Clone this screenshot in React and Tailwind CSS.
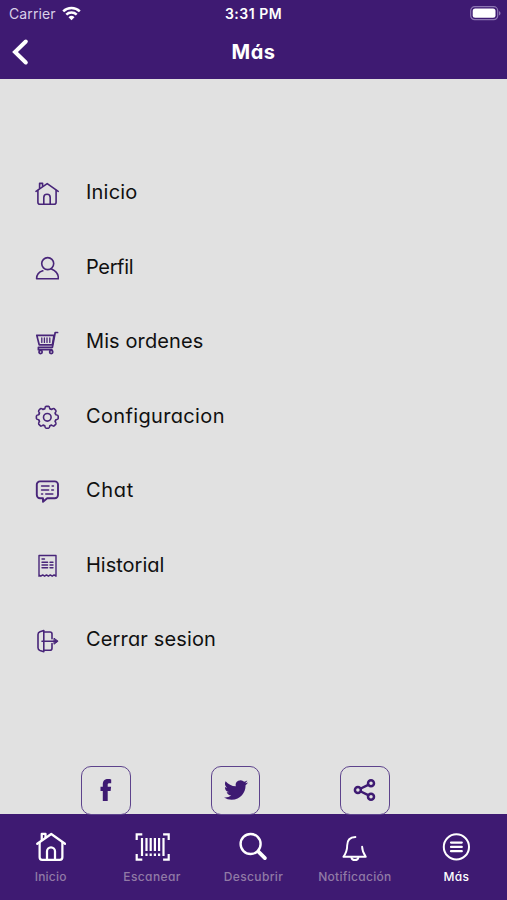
import React from 'react';

function Icon({ className = 'w-6 h-6', stroke = 1.5, children, viewBox = '0 0 24 24' }) {
  return (
    <svg
      className={className}
      viewBox={viewBox}
      fill="none"
      stroke="currentColor"
      strokeWidth={stroke}
      strokeLinecap="round"
      strokeLinejoin="round"
    >
      {children}
    </svg>
  );
}

function HomeIcon({ className, stroke = 1.6 }) {
  return (
    <Icon className={className} stroke={stroke}>
      <path d="M1 9.4 12.2 1.6 23.2 9.4" />
      <path d="M2.9 8.6v11.6a2 2 0 0 0 2 2h14.2a2 2 0 0 0 2-2V8.600" />
      <path d="M4.600 6.400V1.400h3v2.800" />
      <path d="M8.800 22v-6.600a3.200 3.200 0 0 1 6.400 0V22" />
    </Icon>
  );
}

function ProfileIcon() {
  return (
    <Icon stroke={1.6}>
      <circle cx="12.700" cy="7.600" r="6" />
      <path d="M7.800 14.800C4 16 1.600 19.200 1.600 22.700h21.800c0-4.200-2.800-8-7-9.600" />
    </Icon>
  );
}

function CartIcon() {
  return (
    <Icon stroke={1.7}>
      <path d="M1.800 4.400h17.200l-1.600 9.400H4.200z" />
      <path d="M22.600 1.500h-2.400l-2.800 14.800H4.400" />
      <path d="M6.800 7v4.400M9.400 7v4.400M12 7v4.400M14.800 7v4.400" strokeWidth="1.300" />
      <circle cx="5.600" cy="21" r="1.600" />
      <circle cx="16.200" cy="21" r="1.600" />
      <path d="M3.400 16.400v2.300h13.400" />
    </Icon>
  );
}

function GearIcon() {
  const teeth = [0, 45, 90, 135, 180, 225, 270, 315];
  return (
    <Icon stroke={1.6}>
      {teeth.map((deg) => (
        <path
          key={deg}
          transform={`translate(12.300 12.300) rotate(${deg})`}
          d="M-3.400-8.200-2.500-8.500Q-2.100-10.900-1.300-10.900H1.300Q2.100-10.900 2.500-8.500L3.400-8.200"
        />
      ))}
      <circle cx="12.300" cy="12.300" r="3.800" />
    </Icon>
  );
}

function ChatIcon() {
  return (
    <Icon stroke={1.9}>
      <path d="M5 1.400h14.800a3.200 3.200 0 0 1 3.200 3.200V15a3.200 3.200 0 0 1-3.200 3.200H12.200l-4.200 3.600v-3.600H5A3.200 3.200 0 0 1 1.800 15V4.600A3.200 3.200 0 0 1 5 1.400z" />
      <path d="M6.600 6h7.400M17.200 6h1.200M6.600 10h7M16.800 10h1.600M6.600 14h1M10.800 14h7" strokeWidth="1.600" />
    </Icon>
  );
}

function ReceiptIcon() {
  return (
    <Icon stroke={1.4}>
      <path d="M4 1.500h17v20.700l-1.900-1.300-1.900 1.300-1.900-1.300-1.900 1.300-1.900-1.300-1.900 1.300-1.900-1.300-1.900 1.300-1.800-1.300L4 22.200z" />
      <path d="M7 5h2.500M7 8.200h5.600M15 8.200h3M7 11h5.600M15 11h3M7 13.800h5.600M15 13.800h3" />
    </Icon>
  );
}

function LogoutIcon() {
  return (
    <Icon stroke={1.6}>
      <path d="M8.800 1.600v21.200L5 21.600a3 3 0 0 1-2-2.800V5.600A3 3 0 0 1 5 2.800z" />
      <path d="M9 3h6a2 2 0 0 1 2 2v4.800M17 14.600v4.600a2 2 0 0 1-2 2H9" />
      <path d="M7 12.200h14" />
      <path d="m19.300 9.400 3.800 2.800-3.800 2.800z" fill="currentColor" strokeWidth="1" />
    </Icon>
  );
}

function FacebookIcon() {
  return (
    <svg className="w-6 h-6" viewBox="0 0 24 24" fill="currentColor">
      <path d="M8.800 23V13H6.500V8.800h2.300V6.500c0-3.600 2-5.400 5.300-5.400 1.100 0 2.200.1 3.100.3v3.800h-1.800c-1.300 0-1.700.5-1.700 1.500v2.100h3.400L16.600 13h-2.900v10z" />
    </svg>
  );
}

function TwitterIcon() {
  return (
    <svg className="w-6 h-6 ml-px" viewBox="0 0 24 24" fill="currentColor">
      <path d="M23.953 4.570a10 10 0 0 1-2.825.775 4.958 4.958 0 0 0 2.163-2.723 9.990 9.990 0 0 1-3.127 1.184 4.920 4.920 0 0 0-8.384 4.482C7.690 8.095 4.067 6.130 1.640 3.162a4.822 4.822 0 0 0-.666 2.475c0 1.710.870 3.213 2.188 4.096a4.904 4.904 0 0 1-2.228-.616v.060a4.923 4.923 0 0 0 3.946 4.827 4.996 4.996 0 0 1-2.212.085 4.936 4.936 0 0 0 4.604 3.417 9.867 9.867 0 0 1-6.102 2.105c-.390 0-.779-.023-1.170-.067a13.995 13.995 0 0 0 7.557 2.209c9.053 0 13.998-7.496 13.998-13.985 0-.210 0-.420-.015-.630a9.935 9.935 0 0 0 2.460-2.548z" />
    </svg>
  );
}

function ShareIcon() {
  return (
    <Icon stroke={2.500}>
      <circle cx="4.900" cy="12" r="3" />
      <circle cx="18" cy="5.200" r="3" />
      <circle cx="18" cy="18.800" r="3" />
      <path d="m7.800 10.500 7.400-3.700M7.800 13.500l7.400 3.700" />
    </Icon>
  );
}

function BarcodeIcon() {
  return (
    <svg className="w-[36px] h-[30px] translate-x-[0.500px]" viewBox="0 0 36 30" fill="none" stroke="currentColor">
      <path d="M2.200 8V2.400h5.600M28.600 2.400h5.600V8M2.200 22v5.600h5.600M28.600 27.600h5.600V22" strokeWidth="2.200" />
      <path d="M7.500 6v18M12 6v13M16.200 6v13M20.400 6v13M24.600 6v13M29 6v18" strokeWidth="2.200" />
      <path d="M12 21.400v2.600M16.200 21.400v2.600M20.400 21.400v2.600M24.600 21.400v2.600" strokeWidth="2.200" />
    </svg>
  );
}

function SearchIcon() {
  return (
    <Icon className="w-[30px] h-[30px]" viewBox="0 0 30 30" stroke={2.400}>
      <circle cx="12.600" cy="12" r="10" />
      <path d="m20.400 19.600 6.500 6.500" strokeWidth="3.800" />
    </Icon>
  );
}

function BellIcon() {
  return (
    <Icon className="w-[30px] h-[30px]" viewBox="0 0 30 30" stroke={1.900}>
      <path d="M15.400 5c-5.600.200-8.200 3.800-8.200 8.300 0 5-1 7.800-3.800 11.500h22.400c-2.300-3.200-3.700-6-3.700-10.200" />
      <path d="M11.400 25.500c.6 3.400 6.400 3.400 7 0" />
    </Icon>
  );
}

function MoreIcon() {
  return (
    <Icon className="w-[30px] h-[30px]" viewBox="0 0 30 30" stroke={2}>
      <circle cx="15.400" cy="14.900" r="12.600" />
      <path d="M10 10.600h10.800M10 14.900h10.800M10 19.200h10.800" strokeWidth="2.200" />
    </Icon>
  );
}

const menuItems = [
  { label: 'Inicio', icon: <HomeIcon />, spacing: 'tracking-[0.2px]' },
  { label: 'Perfil', icon: <ProfileIcon />, spacing: 'tracking-[-0.35px]' },
  { label: 'Mis ordenes', icon: <CartIcon />, spacing: 'tracking-[0.1px]' },
  { label: 'Configuracion', icon: <GearIcon />, spacing: 'tracking-[0.35px]' },
  { label: 'Chat', icon: <ChatIcon />, spacing: 'tracking-[0.7px]' },
  { label: 'Historial', icon: <ReceiptIcon />, spacing: 'tracking-[0px]' },
  { label: 'Cerrar sesion', icon: <LogoutIcon />, spacing: 'tracking-[0.15px]' },
];

const socials = [
  { name: 'facebook', icon: <FacebookIcon /> },
  { name: 'twitter', icon: <TwitterIcon /> },
  { name: 'share', icon: <ShareIcon /> },
];

const tabs = [
  { label: 'Inicio', icon: <HomeIcon className="w-[30px] h-[30px]" stroke={1.800} />, spacing: 'tracking-[0.2px]' },
  { label: 'Escanear', icon: <BarcodeIcon />, spacing: 'tracking-[0.4px]' },
  { label: 'Descubrir', icon: <SearchIcon />, spacing: 'tracking-[0.35px]' },
  { label: 'Notificación', icon: <BellIcon />, spacing: 'tracking-[0.3px]' },
  { label: 'Más', icon: <MoreIcon />, active: true, spacing: 'tracking-[0.3px]' },
];

function StatusBar() {
  return (
    <div className="h-[27px] grid grid-cols-3 items-center pl-[9px] pr-[6px] text-[14px] leading-none [font-feature-settings:normal]">
      <div className="flex items-center gap-[6px]">
        <span className="text-[#d9cfe8] tracking-[0.1px]">Carrier</span>
        <svg className="w-[19px] h-[15px]" viewBox="0 0 19 15" fill="none" stroke="white" strokeWidth="2.500">
          <path d="M1.200 5.300a11.900 11.900 0 0 1 16.600 0" />
          <path d="M4.300 8.600a7.400 7.400 0 0 1 10.400 0" />
          <path d="M9.500 14.300 6.500 11.300a4.300 4.300 0 0 1 6 0z" fill="white" stroke="none" />
        </svg>
      </div>
      <span className="-ml-[3px] text-center font-semibold tracking-[0.500px] whitespace-nowrap">3:31 PM</span>
      <svg className="w-[31px] h-[15px] justify-self-end" viewBox="0 0 31 15">
        <rect x="0.700" y="0.700" width="27" height="13" rx="4" fill="none" stroke="#8d76b3" strokeWidth="1.200" />
        <rect x="2.700" y="2.600" width="22.800" height="9.200" rx="2.500" fill="white" />
        <path d="M29 5.300c2 .7 2 3.500 0 4.200z" fill="#8d76b3" />
      </svg>
    </div>
  );
}

export default function App() {
  return (
    <div className="w-[507px] h-[900px] flex flex-col overflow-hidden bg-[#e1e1e1] font-['Inter',sans-serif] [font-feature-settings:'cv11']">
      <header className="h-[79px] shrink-0 bg-[#3e1a72] text-white">
        <StatusBar />
        <div className="h-[50px] grid grid-cols-3 items-center">
          <svg className="w-[18px] h-[28px] ml-[11px]" viewBox="0 0 18 28" fill="none" stroke="white" strokeWidth="4" strokeLinecap="round">
            <path d="M14.800 3.500 4 14 14.800 24.500" />
          </svg>
          <h1 className="text-center text-[20px] font-bold tracking-[0.500px]">Más</h1>
        </div>
      </header>

      <main className="flex-1 min-h-0 pt-[76px] flex flex-col">
        <ul className="flex flex-col">
          {menuItems.map((item) => (
            <li key={item.label} className="h-[74.5px] flex items-center">
              <span className="ml-[35px] mt-[3px] text-[#482579]">{item.icon}</span>
              <span className={`ml-[27px] text-[20px] leading-none text-[#101010] ${item.spacing}`}>{item.label}</span>
            </li>
          ))}
        </ul>

        <div className="flex gap-20 pl-[81px] mt-[89px] relative z-10">
          {socials.map((social) => (
            <button
              key={social.name}
              className="w-[49.5px] h-[49.5px] shrink-0 flex items-center justify-center rounded-[10px] border-[1.5px] border-[#5d438c] text-[#3e1a72]"
            >
              {social.icon}
            </button>
          ))}
        </div>
      </main>

      <nav className="h-[86px] shrink-0 grid grid-cols-5 bg-[#3e1a72]">
        {tabs.map((tab) => (
          <div key={tab.label} className="flex flex-col items-center pt-[18px] text-white">
            {tab.icon}
            <span
              className={`mt-[8px] text-[12px] leading-[14px] font-medium ${tab.spacing} ${tab.active ? 'text-white' : 'text-[#917aa6]'}`}
            >
              {tab.label}
            </span>
          </div>
        ))}
      </nav>
    </div>
  );
}
